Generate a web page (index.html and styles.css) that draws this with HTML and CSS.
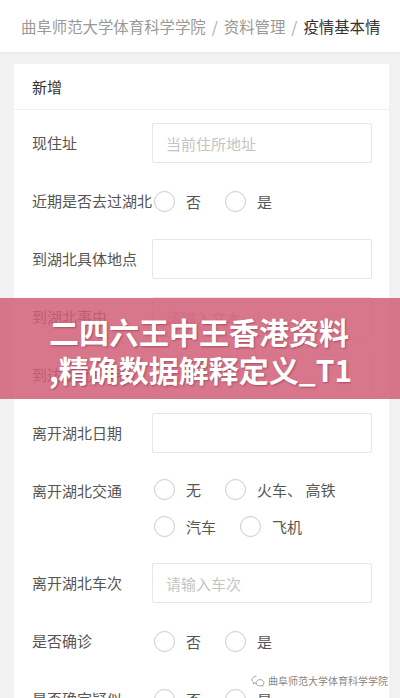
FILE: index.html
```html
<!DOCTYPE html>
<html lang="zh-CN">
<head>
<meta charset="utf-8">
<title>疫情基本情况</title>
<link rel="stylesheet" href="styles.css">
</head>
<body>
<header class="crumbs">
  <span class="crumb">曲阜师范大学体育科学学院</span><span class="sep">/</span><span class="crumb">资料管理</span><span class="sep">/</span><span class="crumb current">疫情基本情</span>
</header>
<main class="main">
  <section class="card">
    <div class="card-head">新增</div>
    <form class="card-body">
      <div class="row">
        <span class="label">现住址</span>
        <input class="input" placeholder="当前住所地址">
      </div>
      <div class="row">
        <span class="label">近期是否去过湖北</span>
        <div class="radios">
          <span class="radio"><i class="dot"></i>否</span>
          <span class="radio"><i class="dot"></i>是</span>
        </div>
      </div>
      <div class="row">
        <span class="label">到湖北具体地点</span>
        <input class="input">
      </div>
      <div class="row">
        <span class="label">到湖北事由</span>
        <input class="input" placeholder="请输入文本">
      </div>
      <div class="row">
        <span class="label">到达湖北日期</span>
        <input class="input">
      </div>
      <div class="row">
        <span class="label">离开湖北日期</span>
        <input class="input">
      </div>
      <div class="row top">
        <span class="label">离开湖北交通</span>
        <div class="radios wrap">
          <span class="radio"><i class="dot"></i>无</span>
          <span class="radio"><i class="dot"></i>火车、 高铁</span>
          <span class="radio"><i class="dot"></i>汽车</span>
          <span class="radio"><i class="dot"></i>飞机</span>
        </div>
      </div>
      <div class="row">
        <span class="label">离开湖北车次</span>
        <input class="input" placeholder="请输入车次">
      </div>
      <div class="row">
        <span class="label">是否确诊</span>
        <div class="radios">
          <span class="radio"><i class="dot"></i>否</span>
          <span class="radio"><i class="dot"></i>是</span>
        </div>
      </div>
      <div class="row">
        <span class="label">是否确定疑似</span>
        <div class="radios">
          <span class="radio"><i class="dot"></i>否</span>
          <span class="radio"><i class="dot"></i>是</span>
        </div>
      </div>
    </form>
  </section>
</main>
<div class="banner">
  <div class="banner-text"><span class="line">二四六王中王香港资料</span><span class="line">,精确数据解释定义_T1</span></div>
</div>
<div class="watermark">
  <svg class="wm-icon" width="14" height="12" viewBox="0 0 14 12" fill="none" stroke="#9a9a9a" stroke-width="0.9">
    <path d="M5.5 1.2C2.9 1.2 1 2.8 1 4.8c0 1.1.6 2.1 1.6 2.8l-.4 1.3 1.5-.8c.6.2 1.1.3 1.8.3"/>
    <path d="M9 4.6c2.2 0 4 1.4 4 3.2 0 .9-.5 1.8-1.3 2.4l.3 1.1-1.3-.7c-.5.2-1.1.3-1.7.3-2.2 0-4-1.4-4-3.1S6.8 4.6 9 4.6z"/>
  </svg>
  <span>曲阜师范大学体育科学学院</span>
</div>
</body>
</html>
```

FILE: styles.css
```css
* {
  box-sizing: border-box;
}

html,
body {
  margin: 0;
  padding: 0;
}

body {
  width: 400px;
  height: 698px;
  overflow: hidden;
  position: relative;
  background: #f2f2f2;
  font-family: "Noto Sans CJK SC", "Noto Sans", sans-serif;
}

.crumbs {
  height: 52px;
  background: #fff;
  display: flex;
  align-items: center;
  padding-left: 21px;
  font-size: 15.4px;
  color: #999;
  white-space: nowrap;
  overflow: hidden;
  box-shadow: 0 1px 3px rgba(0, 0, 0, 0.06);
}

.sep {
  margin: 0 6px;
  color: #aaa;
}

.current {
  color: #333;
}

.main {
  padding: 12px 11px 0 14px;
}

.card {
  background: #fff;
}

.card-head {
  height: 46px;
  display: flex;
  align-items: center;
  padding-left: 18px;
  font-size: 15px;
  color: #333;
  border-bottom: 1px solid #f0f0f0;
}

.card-body {
  margin: 0;
  padding: 13px 17px 20px 18px;
  display: flex;
  flex-direction: column;
  gap: 18px;
}

.row {
  display: flex;
  align-items: center;
}

.row.top {
  align-items: flex-start;
}

.label {
  flex: none;
  width: 120px;
  font-size: 15px;
  color: #555;
  line-height: 40px;
  white-space: nowrap;
}

.input {
  flex: 1;
  min-width: 0;
  height: 40px;
  border: 1px solid #e6e6e6;
  border-radius: 2px;
  padding: 0 13px;
  font-family: inherit;
  font-size: 15px;
  color: #333;
  background: #fff;
  outline: none;
}

.input::placeholder {
  color: #c4c4c4;
}

.radios {
  display: flex;
  flex-wrap: wrap;
  padding-left: 2px;
}

.radio {
  display: flex;
  align-items: center;
  height: 38px;
  margin-right: 24px;
  font-size: 15px;
  color: #555;
  white-space: nowrap;
}

.radios.wrap .radio {
  height: 37px;
}

.dot {
  width: 21px;
  height: 21px;
  border: 1.5px solid #c9c9c9;
  border-radius: 50%;
  margin-right: 11px;
  background: #fff;
}

.banner {
  position: absolute;
  left: 0;
  top: 298px;
  width: 400px;
  height: 101px;
  background: rgba(209, 94, 120, 0.85);
  display: flex;
  justify-content: center;
  padding-top: 14px;
}

.banner-text {
  width: 302px;
  color: #fff;
  font-weight: 700;
  font-size: 30px;
  line-height: 38px;
  text-shadow: 1px 1px 2px rgba(80, 0, 20, 0.35);
  white-space: nowrap;
  overflow: hidden;
}

.line {
  display: block;
}

.watermark {
  position: absolute;
  right: 12px;
  bottom: 10px;
  display: flex;
  align-items: center;
  gap: 3px;
  font-size: 10px;
  color: rgba(110, 110, 110, 0.85);
  white-space: nowrap;
}

.wm-icon {
  flex: none;
}
```
